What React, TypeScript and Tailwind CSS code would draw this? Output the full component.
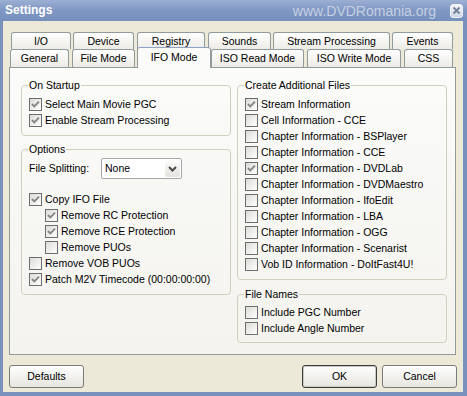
import React from 'react';

const Check = ({ checked }: { checked?: boolean }) => (
  <span className="w-[13px] h-[13px] shrink-0 border border-[#6e6e6e] bg-linear-to-br from-[#dcdcd6] to-white flex items-center justify-center">
    {checked && (
      <svg width="11" height="11" viewBox="0 0 11 11">
        <path d="M2 5l2.3 2.4L9 2.6" stroke="#878787" strokeWidth="2" fill="none" />
      </svg>
    )}
  </span>
);

const Row = ({ label, checked, indent }: { label: string; checked?: boolean; indent?: boolean }) => (
  <div className={`flex items-center h-4 gap-[3px] ${indent ? 'pl-4' : ''}`}>
    <Check checked={checked} />
    <span className="whitespace-nowrap">{label}</span>
  </div>
);

const Group = ({ title, children, className = '' }: { title: string; children: React.ReactNode; className?: string }) => (
  <fieldset className={`border border-[#d0d0bf] rounded-[4px] px-[7px] ${className}`}>
    <legend className="-ml-px px-px leading-[13px]">{title}</legend>
    {children}
  </fieldset>
);

const Tab = ({ label, w, active }: { label: string; w: string; active?: boolean }) =>
  active ? (
    <div
      className={`${w} relative z-10 -mt-[2px] h-[21px] border border-b-0 border-[#919b9c] border-t-[#8fa2c6] rounded-t-[3px] bg-[#fbfbfa] flex items-center justify-center pb-[2px]`}
    >
      {label}
    </div>
  ) : (
    <div
      className={`${w} h-full border border-b-0 border-[#919b9c] rounded-t-[3px] bg-linear-to-b from-white to-[#ecebe6] flex items-center justify-center`}
    >
      {label}
    </div>
  );

const Button = ({ label, isDefault }: { label: string; isDefault?: boolean }) => (
  <button
    className={`w-[75px] h-[23px] rounded-[3px] bg-linear-to-b from-white to-[#e6e5df] ${
      isDefault ? 'border border-[#3c3c3c] shadow-[inset_0_0_0_1px_#c9c9c4]' : 'border border-[#7a7a7a]'
    }`}
  >
    {label}
  </button>
);

export default function App() {
  return (
    <div className="w-[467px] h-[396px] bg-[#7891bd] flex flex-col font-['Liberation_Sans',_Arial,_sans-serif] text-[10.5px] leading-[13px] text-black overflow-hidden">
      {/* title bar */}
      <div className="h-[21px] shrink-0 flex items-center bg-linear-to-b from-[#9cafd3] via-[#7f97c3] to-[#7690bd] pl-[5px]">
        <span className="text-white font-bold text-[12px]">Settings</span>
        <span className="flex-1" />
        <span className="text-[#c6d0e4] text-[14px] leading-[16px]">www.DVDRomania.org</span>
        <span className="ml-[14px] mr-[4px] w-[13px] h-[14px] rounded-[3px] border border-[#eef1f7] bg-linear-to-b from-[#f2f4f8] to-[#cfd7e5] flex items-center justify-center">
          <svg width="9" height="9" viewBox="0 0 9 9">
            <path d="M1.5 1.5l6 6M7.5 1.5l-6 6" stroke="#72809b" strokeWidth="1.8" />
          </svg>
        </span>
      </div>

      {/* client */}
      <div className="flex-1 ml-[3px] mr-[4px] mb-[4px] bg-[#ece9d8] pt-[11px] pl-[6px] flex flex-col">
        <div className="w-[447px]">
          <div className="flex h-[17px] pl-[2px]">
            <Tab label="I/O" w="w-[60px]" />
            <div className="w-[2px]" />
            <Tab label="Device" w="w-[61px]" />
            <div className="w-[3px]" />
            <Tab label="Registry" w="w-[68px]" />
            <div className="w-[3px]" />
            <Tab label="Sounds" w="w-[63px]" />
            <div className="w-[2px]" />
            <Tab label="Stream Processing" w="w-[117px]" />
            <div className="w-[2px]" />
            <Tab label="Events" w="w-[61px]" />
          </div>
          <div className="flex h-[18px] pl-px items-start">
            <Tab label="General" w="w-[59px]" />
            <div className="w-[3px]" />
            <Tab label="File Mode" w="w-[63px]" />
            <div className="w-[2px]" />
            <Tab label="IFO Mode" w="w-[74px]" active />
            <Tab label="ISO Read Mode" w="w-[93px]" />
            <div className="w-[3px]" />
            <Tab label="ISO Write Mode" w="w-[94px]" />
            <div className="w-[3px]" />
            <Tab label="CSS" w="w-[49px]" />
          </div>

          {/* tab page */}
          <div className="h-[288px] border border-[#919b9c] bg-linear-to-b from-[#fbfbfa] to-[#f4f3ee] pt-[11px] pl-[11px] flex gap-[6px]">
            <div className="w-[210px] flex flex-col gap-[7px]">
              <Group title="On Startup" className="pb-[7px]">
                <div className="pt-[4px]">
                  <Row label="Select Main Movie PGC" checked />
                  <Row label="Enable Stream Processing" checked />
                </div>
              </Group>
              <Group title="Options" className="pb-[7px]">
                <div className="pt-[2px] flex items-center">
                  <span className="w-[72px]">File Splitting:</span>
                  <div className="w-[81px] h-[21px] border border-[#a7a6aa] rounded-[2px] bg-white flex items-center">
                    <span className="flex-1 pl-[3px]">None</span>
                    <span className="w-[15px] h-[17px] mr-px rounded-[2px] bg-linear-to-b from-[#fdfdfd] to-[#e4e3de] flex items-center justify-center">
                      <svg width="9" height="6" viewBox="0 0 9 6">
                        <path d="M1 1l3.5 3.5L8 1" stroke="#4a4a4a" strokeWidth="2" fill="none" />
                      </svg>
                    </span>
                  </div>
                </div>
                <div className="pt-[12px]">
                  <Row label="Copy IFO File" checked />
                  <Row label="Remove RC Protection" checked indent />
                  <Row label="Remove RCE Protection" checked indent />
                  <Row label="Remove PUOs" indent />
                  <Row label="Remove VOB PUOs" />
                  <Row label="Patch M2V Timecode (00:00:00:00)" checked />
                </div>
              </Group>
            </div>

            <div className="w-[210px] flex flex-col gap-[8px]">
              <Group title="Create Additional Files" className="pb-[7px]">
                <div className="pt-[4px]">
                  <Row label="Stream Information" checked />
                  <Row label="Cell Information - CCE" />
                  <Row label="Chapter Information - BSPlayer" />
                  <Row label="Chapter Information - CCE" />
                  <Row label="Chapter Information - DVDLab" checked />
                  <Row label="Chapter Information - DVDMaestro" />
                  <Row label="Chapter Information - IfoEdit" />
                  <Row label="Chapter Information - LBA" />
                  <Row label="Chapter Information - OGG" />
                  <Row label="Chapter Information - Scenarist" />
                  <Row label="Vob ID Information - DoItFast4U!" />
                </div>
              </Group>
              <Group title="File Names" className="pb-[6px]">
                <div className="pt-[3px]">
                  <Row label="Include PGC Number" />
                  <Row label="Include Angle Number" />
                </div>
              </Group>
            </div>
          </div>
        </div>

        {/* buttons */}
        <div className="mt-[10px] pr-[6px] flex">
          <Button label="Defaults" />
          <span className="flex-1" />
          <Button label="OK" isDefault />
          <span className="w-[5px]" />
          <Button label="Cancel" />
        </div>
      </div>
    </div>
  );
}
